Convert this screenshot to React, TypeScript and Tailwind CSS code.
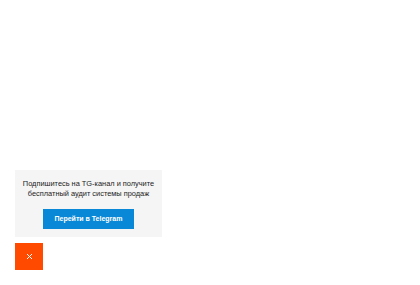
export default function App() {
  return (
    <div className="flex h-screen w-full flex-col justify-end bg-white pb-[15px] pl-[15px] font-['Liberation_Sans',Arial,sans-serif]">
      <div className="flex w-[147px] flex-col items-center bg-[#f5f5f5] pt-[9px] pb-[8px]">
        <p className="text-center text-[7.4px] leading-[10px] text-[#222]">
          Подпишитесь на TG-канал и получите
          <br />
          бесплатный аудит системы продаж
        </p>
        <button className="mt-[10px] h-[20px] w-[91px] bg-[#0a88d8] text-[7px] font-bold text-white">
          Перейти в Telegram
        </button>
      </div>
      <button className="mt-[6px] flex h-[27px] w-[28px] items-center justify-center bg-[#ff4a00]">
        <svg width="7" height="7" viewBox="0 0 7 7">
          <path d="M1 1L6 6M6 1L1 6" stroke="white" strokeWidth="1" />
        </svg>
      </button>
    </div>
  )
}
